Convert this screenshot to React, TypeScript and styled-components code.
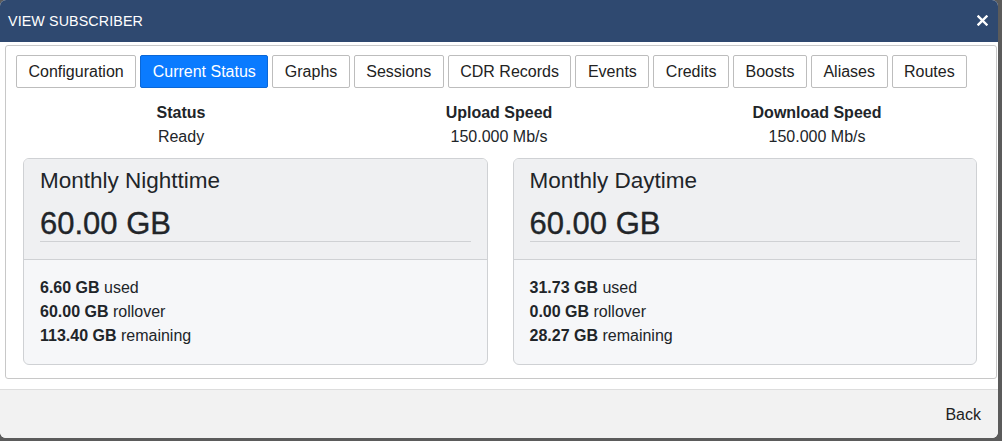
import React from "react";
import styled, { createGlobalStyle } from "styled-components";

type Bucket = {
  title: string;
  total: string;
  used: string;
  rollover: string;
  remaining: string;
};

const tabs = [
  "Configuration",
  "Current Status",
  "Graphs",
  "Sessions",
  "CDR Records",
  "Events",
  "Credits",
  "Boosts",
  "Aliases",
  "Routes",
];

const stats = [
  { label: "Status", value: "Ready" },
  { label: "Upload Speed", value: "150.000 Mb/s" },
  { label: "Download Speed", value: "150.000 Mb/s" },
];

const buckets: Bucket[] = [
  {
    title: "Monthly Nighttime",
    total: "60.00 GB",
    used: "6.60 GB",
    rollover: "60.00 GB",
    remaining: "113.40 GB",
  },
  {
    title: "Monthly Daytime",
    total: "60.00 GB",
    used: "31.73 GB",
    rollover: "0.00 GB",
    remaining: "28.27 GB",
  },
];

const GlobalStyle = createGlobalStyle`
  html, body {
    margin: 0;
    padding: 0;
    background: #5b5b5b;
  }
  body {
    font-family: "Liberation Sans", Arial, Helvetica, sans-serif;
    color: #212529;
  }
  * {
    box-sizing: border-box;
  }
`;

const Dialog = styled.div`
  width: 998px;
  height: 438px;
  background: #ffffff;
  border-radius: 6px;
  overflow: hidden;
  display: flex;
  flex-direction: column;
`;

const Header = styled.div`
  height: 42px;
  flex-shrink: 0;
  background: #2f4970;
  color: #ffffff;
  display: flex;
  align-items: center;
  justify-content: space-between;
  padding: 0 9px 1px 8px;
`;

const Title = styled.div`
  font-size: 14.3px;
  letter-spacing: 0.1px;
`;

const CloseButton = styled.button`
  border: 0;
  background: none;
  padding: 0;
  width: 14px;
  height: 14px;
  display: flex;
  align-items: center;
  justify-content: center;
  cursor: pointer;
`;

const Body = styled.div`
  flex: 1;
  padding: 3px 1px 10px 5px;
`;

const Panel = styled.div`
  height: 334px;
  border: 1px solid #c8c8c8;
  border-radius: 3px;
  padding: 9px 10px 0 10px;
`;

const TabBar = styled.div`
  display: flex;
  gap: 4px;
`;

const Tab = styled.button<{ $active?: boolean }>`
  flex-shrink: 0;
  white-space: nowrap;
  height: 33px;
  padding: 0 11.5px;
  font-family: inherit;
  font-size: 16px;
  border-radius: 2px;
  border: 1px solid ${(p) => (p.$active ? "#0b67d6" : "#bdbdbd")};
  background: ${(p) => (p.$active ? "#0a7bff" : "#ffffff")};
  color: ${(p) => (p.$active ? "#ffffff" : "#222222")};
  cursor: pointer;
`;

const StatRow = styled.div`
  display: grid;
  grid-template-columns: repeat(3, 1fr);
  margin: 13px 10px 0 6px;
  text-align: center;
  font-size: 16px;
  line-height: 24px;
`;

const StatLabel = styled.div`
  font-weight: 700;
`;

const CardRow = styled.div`
  display: grid;
  grid-template-columns: 1fr 1fr;
  column-gap: 25px;
  margin: 9px 9px 0 7px;
`;

const Card = styled.div`
  border: 1px solid #cfd1d4;
  border-radius: 6px;
  overflow: hidden;
  background: #f6f7f9;
`;

const CardHeader = styled.div`
  background: #eff0f2;
  border-bottom: 1px solid #cfd1d4;
  padding: 9px 16px 17px 16px;
`;

const CardTitle = styled.div`
  font-size: 22.5px;
  line-height: 26px;
`;

const CardTotal = styled.div`
  font-size: 31px;
  line-height: 34px;
  margin-top: 13px;
  border-bottom: 1px solid #cfd1d4;
  -webkit-text-stroke: 0.35px #212529;
`;

const CardBody = styled.div`
  padding: 16px;
  font-size: 16px;
  line-height: 24px;
`;

const Footer = styled.div`
  height: 50px;
  flex-shrink: 0;
  background: #f2f2f2;
  border-top: 1px solid #dddddd;
  display: flex;
  align-items: center;
  justify-content: flex-end;
  padding: 0 17px 0 0;
`;

const BackButton = styled.button`
  border: 0;
  background: none;
  font-family: inherit;
  font-size: 16px;
  color: #222222;
  padding: 0;
  cursor: pointer;
`;

const CloseIcon = () => (
  <svg width="11" height="11" viewBox="0 0 11 11">
    <path
      d="M1.5 1.5 L9.5 9.5 M9.5 1.5 L1.5 9.5"
      stroke="#ffffff"
      strokeWidth="2.4"
      strokeLinecap="square"
    />
  </svg>
);

const BucketCard = ({ bucket }: { bucket: Bucket }) => (
  <Card>
    <CardHeader>
      <CardTitle>{bucket.title}</CardTitle>
      <CardTotal>{bucket.total}</CardTotal>
    </CardHeader>
    <CardBody>
      <div>
        <b>{bucket.used}</b> used
      </div>
      <div>
        <b>{bucket.rollover}</b> rollover
      </div>
      <div>
        <b>{bucket.remaining}</b> remaining
      </div>
    </CardBody>
  </Card>
);

const App = () => {
  return (
    <>
      <GlobalStyle />
      <Dialog>
        <Header>
          <Title>VIEW SUBSCRIBER</Title>
          <CloseButton aria-label="Close">
            <CloseIcon />
          </CloseButton>
        </Header>
        <Body>
          <Panel>
            <TabBar>
              {tabs.map((t) => (
                <Tab key={t} $active={t === "Current Status"}>
                  {t}
                </Tab>
              ))}
            </TabBar>
            <StatRow>
              {stats.map((s) => (
                <div key={s.label}>
                  <StatLabel>{s.label}</StatLabel>
                  <div>{s.value}</div>
                </div>
              ))}
            </StatRow>
            <CardRow>
              {buckets.map((b) => (
                <BucketCard key={b.title} bucket={b} />
              ))}
            </CardRow>
          </Panel>
        </Body>
        <Footer>
          <BackButton>Back</BackButton>
        </Footer>
      </Dialog>
    </>
  );
};

export default App;
